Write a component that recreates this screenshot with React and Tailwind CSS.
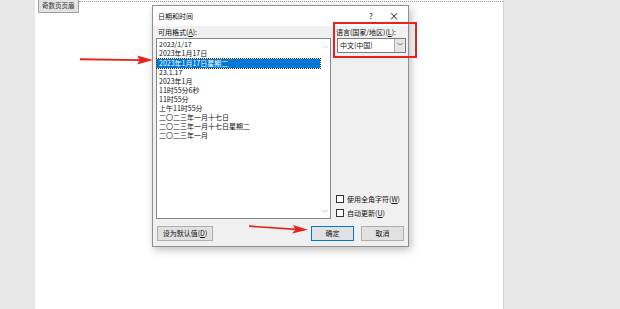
const formats = [
  '2023/1/17',
  '2023年1月17日',
  '2023年1月17日星期二',
  '23.1.17',
  '2023年1月',
  '11时55分6秒',
  '11时55分',
  '上午11时55分',
  '二〇二三年一月十七日',
  '二〇二三年一月十七日星期二',
  '二〇二三年一月',
];

function Checkbox({ label }) {
  return (
    <div className="flex items-center gap-[3px] h-[14px]">
      <span className="w-[8px] h-[8px] border border-[#333] bg-white" />
      <span>{label}</span>
    </div>
  );
}

function Button({ children, primary, className = '' }) {
  return (
    <div
      className={`h-[15px] flex items-center justify-center bg-[#e1e1e1] border ${
        primary ? 'border-[#0078d7]' : 'border-[#adadad]'
      } ${className}`}
    >
      {children}
    </div>
  );
}

export default function App() {
  return (
    <div
      className="relative w-[620px] h-[309px] overflow-hidden bg-[#e6e6e6] text-[7px] text-[#111]"
      style={{ fontFamily: '"Noto Sans CJK SC", "Noto Sans", sans-serif' }}
    >
      {/* page */}
      <div className="ml-[35px] w-[469px] h-full bg-white border-r border-[#d0d0d0]">
        <div className="flex items-start">
          <div className="ml-[3px] px-[3px] h-[13px] flex items-center bg-[#e3e3e3] border border-[#a0a0a0] border-t-0 text-[6.5px] text-[#333]">
            奇数页页眉
          </div>
          <div className="flex-1 mt-[1px] border-t border-dotted border-[#9a9a9a]" />
        </div>
      </div>

      {/* dialog */}
      <div className="absolute left-[152px] top-[5px] w-[257px] h-[242px] bg-[#f0f0f0] border border-[#8f8f8f] shadow-[2px_3px_8px_rgba(0,0,0,0.25)] flex flex-col">
        <div className="h-[20px] flex items-center pl-[5px] pr-[9px] bg-white">
          <span className="flex-1">日期和时间</span>
          <span className="w-[20px] text-center text-[8px]">?</span>
          <span className="ml-[8px] text-[10px] leading-none">×</span>
        </div>

        <div className="flex flex-1 pl-[3px] pt-[1px]">
          <div className="w-[178px] flex flex-col">
            <div className="h-[10px] flex items-center pl-[2px]">
              可用格式(<span className="underline">A</span>):
            </div>
            <div className="mt-[1px] h-[181px] flex bg-white border border-[#828790]">
              <div className="flex-1 pt-[1px]">
                {formats.map((f, i) => (
                  <div
                    key={f}
                    className={`h-[9px] leading-[9px] pl-[2px] ${
                      i === 2 ? 'mt-[1px] bg-[#0078d7] text-white outline outline-1 outline-dotted outline-[#333]' : ''
                    }`}
                  >
                    {f}
                  </div>
                ))}
              </div>
              <div className="w-[10px] flex flex-col justify-between items-center py-[1px] text-[#b0b0b0] text-[6px]">
                <span>︿</span>
                <span>﹀</span>
              </div>
            </div>
          </div>

          <div className="flex-1 ml-[5px] flex flex-col pr-[2px]">
            <div className="h-[10px] flex items-center">
              语言(国家/地区)(<span className="underline">L</span>):
            </div>
            <div className="mt-[1px] ml-[1px] w-[69px] h-[15px] flex bg-white border border-[#7a7a7a]">
              <span className="flex-1 pl-[2px] flex items-center">中文(中国)</span>
              <span className="w-[11px] bg-[#e5e5e5] border-l border-[#b0b0b0] flex items-center justify-center text-[6px] text-[#444]">
                ﹀
              </span>
            </div>
            <div className="mt-auto mb-[1px] flex flex-col">
              <Checkbox label={<>使用全角字符(<span className="underline">W</span>)</>} />
              <Checkbox label={<>自动更新(<span className="underline">U</span>)</>} />
            </div>
          </div>
        </div>

        <div className="h-[25px] flex items-center pl-[4px] pr-[4px]">
          <Button className="w-[56px]">
            设为默认值(<span className="underline">D</span>)
          </Button>
          <Button primary className="ml-auto w-[43px]">
            确定
          </Button>
          <Button className="ml-[7px] w-[43px]">取消</Button>
        </div>
      </div>

      {/* annotation highlight */}
      <div className="absolute left-[333px] top-[22px] w-[84px] h-[36px] border-2 border-[#e8231d]" />

      {/* arrows */}
      <svg className="absolute inset-0 pointer-events-none" width="620" height="309">
        <path d="M80 58.3 L140 59.3 L140 61 L80 60.2 Z" fill="#e8231d" />
        <path d="M137 55.5 L153 60 L137 64.5 L140 60 Z" fill="#e8231d" />
        <path d="M249 225.3 L296 228.5 L296 230.2 L249 227 Z" fill="#e8231d" />
        <path d="M293 225 L308 229.8 L292 233.5 L295.5 229.4 Z" fill="#e8231d" />
      </svg>
    </div>
  );
}
